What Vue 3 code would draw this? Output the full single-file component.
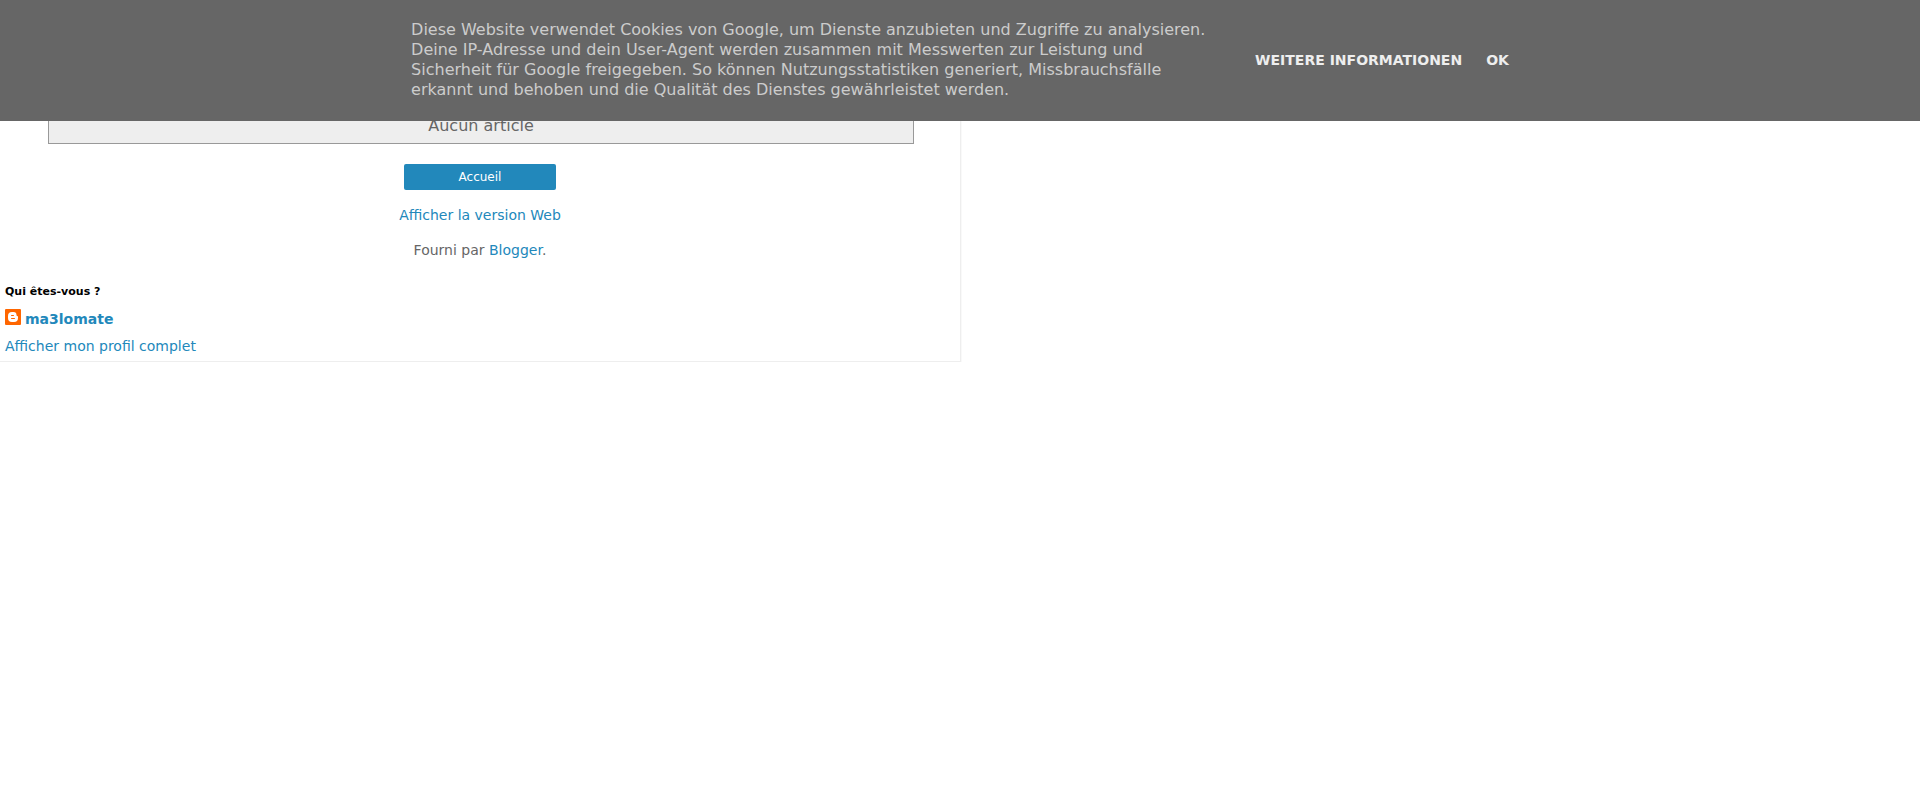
<script setup>
const consent =
  'Diese Website verwendet Cookies von Google, um Dienste anzubieten und Zugriffe zu analysieren. Deine IP-Adresse und dein User-Agent werden zusammen mit Messwerten zur Leistung und Sicherheit für Google freigegeben. So können Nutzungsstatistiken generiert, Missbrauchsfälle erkannt und behoben und die Qualität des Dienstes gewährleistet werden.'
</script>

<template>
  <div class="page">
    <section class="cookie" aria-label="Cookies">
      <p class="cookie-text">{{ consent }}</p>
      <div class="cookie-actions">
        <a href="#info">WEITERE INFORMATIONEN</a>
        <button type="button">OK</button>
      </div>
    </section>

    <main class="content">
      <div class="status">Aucun article</div>
      <a class="home" href="#home">Accueil</a>
      <p class="line"><a href="#web">Afficher la version Web</a></p>
      <p class="line">Fourni par <a href="#blogger">Blogger</a>.</p>

      <section class="profile">
        <h2>Qui êtes-vous ?</h2>
        <a class="author" href="#author">
          <svg width="16" height="16" viewBox="0 0 16 16" aria-hidden="true">
            <rect width="16" height="16" rx="1" fill="#f60" />
            <path
              fill="#fff"
              fill-rule="evenodd"
              d="M7 3h1.500a3 3 0 0 1 3 3q0 1 .7 1 .8 0 .8.800V9a4 4 0 0 1-4 4H7a4 4 0 0 1-4-4V7a4 4 0 0 1 4-4zM6.500 6a.5.5 0 0 0 0 1h2a.5.5 0 0 0 0-1zM6.500 9a.5.5 0 0 0 0 1h3a.5.5 0 0 0 0-1z"
            />
          </svg>
          <span>ma3lomate</span>
        </a>
        <a class="full" href="#profile">Afficher mon profil complet</a>
      </section>
    </main>
  </div>
</template>

<style>
body {
  margin: 0;
  background: #fff;
}
</style>

<style scoped>
.page {
  font: 14px/18px "DejaVu Sans", sans-serif;
  color: #666;
}
a {
  color: #2288bb;
  text-decoration: none;
}
.cookie {
  position: fixed;
  inset: 0 0 auto;
  z-index: 2;
  box-sizing: border-box;
  display: flex;
  align-items: center;
  justify-content: center;
  gap: 44px;
  padding: 20px 16px 21px;
  background: #666;
}
.cookie-text {
  flex: 0 1 800px;
  margin: 0;
  font-size: 16px;
  line-height: 20px;
  color: #ccc;
}
.cookie-actions {
  display: flex;
  gap: 24px;
  white-space: nowrap;
}
.cookie-actions a,
.cookie-actions button {
  padding: 0;
  border: 0;
  background: none;
  font: bold 14px/18px "DejaVu Sans", sans-serif;
  color: #eee;
  cursor: pointer;
}
.content {
  width: 50%;
  padding-top: 88px;
  border: solid #eee;
  border-width: 0 1px 1px 0;
  text-align: center;
  box-shadow: 1px 1px #f9f9f9;
}
.status {
  width: 90%;
  margin-left: 5%;
  padding: 27px 0 7px;
  border: 1px solid #999;
  background: #eee;
  font-size: 16px;
  line-height: 20px;
}
.home {
  display: block;
  width: 152px;
  margin: 20px auto 16px;
  border-radius: 2px;
  background: #2288bb;
  font-size: 12px;
  line-height: 26px;
  color: #fff;
}
.line {
  margin: 0 0 17px;
}
.profile {
  padding: 9px 5px 6px;
  text-align: left;
}
h2 {
  margin: 0 0 10px;
  font-size: 11px;
  line-height: 14px;
  color: #000;
}
.author {
  display: flex;
  gap: 4px;
  font-weight: bold;
}
.author span {
  padding-top: 1px;
}
.full {
  display: block;
  margin-top: 9px;
}
</style>
